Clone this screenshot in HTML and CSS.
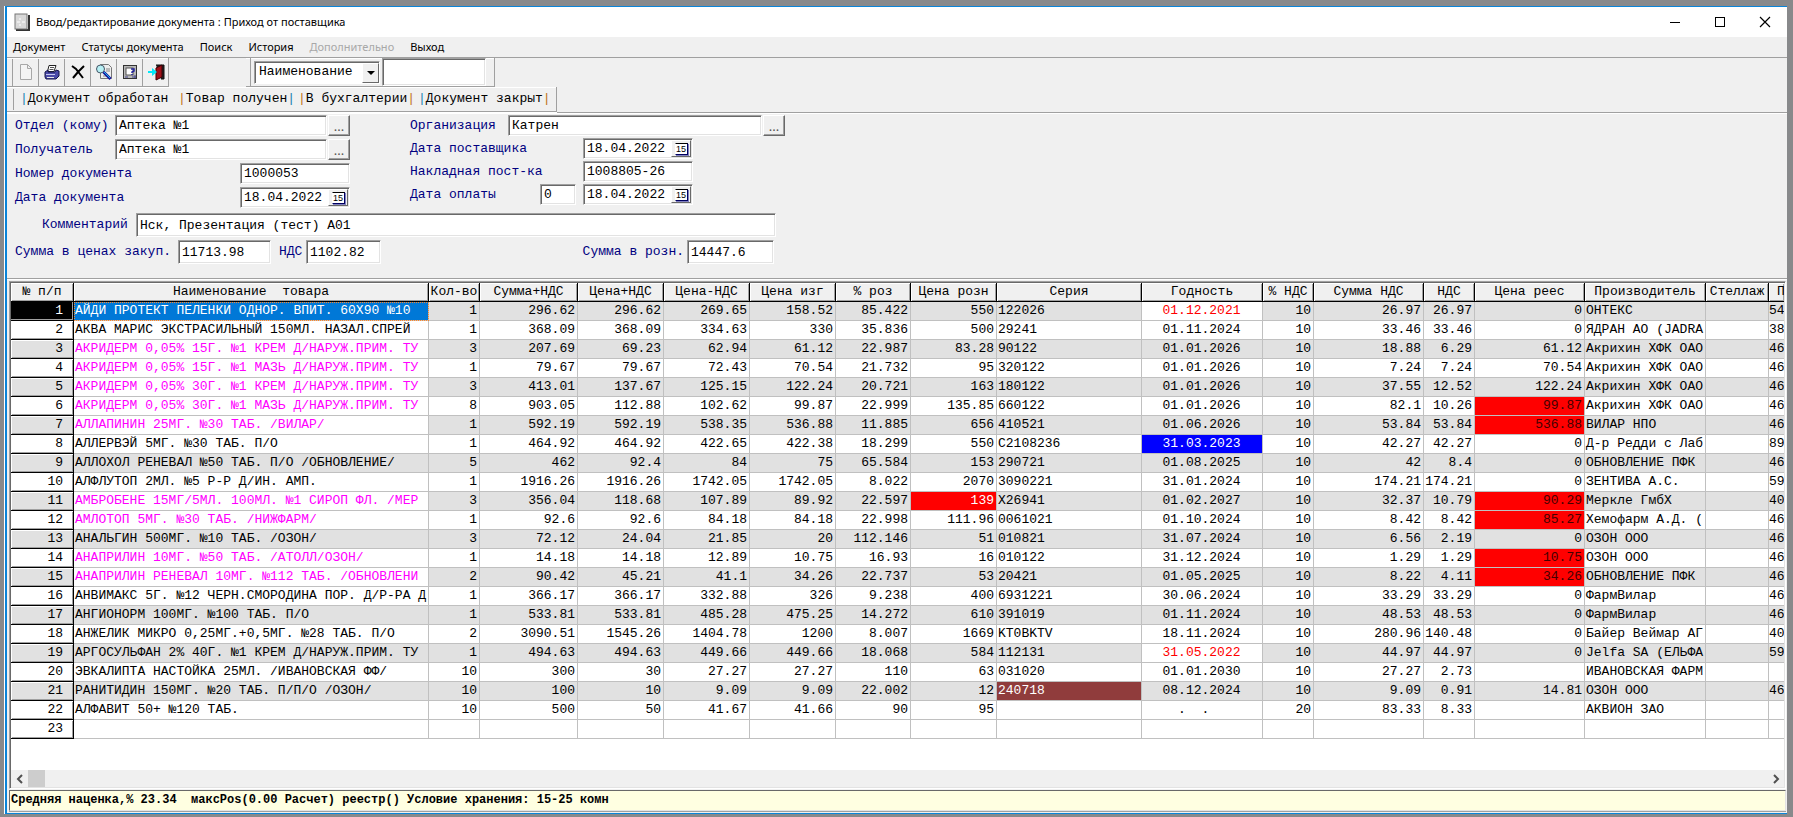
FILE: index.html
```html
<!DOCTYPE html>
<html lang="ru">
<head>
<meta charset="utf-8">
<title>Ввод/редактирование документа : Приход от поставщика</title>
<link rel="stylesheet" href="styles.css">
</head>
<body>
<div class="window">
  <header class="titlebar">
    <svg class="title-icon" width="16" height="18" viewBox="0 0 16 18"><path d="M2 17h13V2" fill="none" stroke="#333" stroke-width="2"/><rect x="1" y="1" width="12" height="15" fill="#d8d8d8" stroke="#777"/><path d="M3 9h3M8 9h3M6 5v2M6 11v2" stroke="#fff"/></svg>
    <h1 class="title">Ввод/редактирование документа : Приход от поставщика</h1>
    <div class="caption-buttons">
      <button class="caption" type="button" aria-label="Свернуть"><svg width="12" height="12" viewBox="0 0 12 12"><path d="M1 6.500h10" stroke="#000"/></svg></button>
      <button class="caption" type="button" aria-label="Развернуть"><svg width="12" height="12" viewBox="0 0 12 12"><rect x="1.500" y="1.500" width="9" height="9" fill="none" stroke="#000"/></svg></button>
      <button class="caption" type="button" aria-label="Закрыть"><svg width="12" height="12" viewBox="0 0 12 12"><path d="M1 1l10 10M11 1L1 11" stroke="#000" stroke-width="1.200"/></svg></button>
    </div>
  </header>

  <nav class="menubar">
    <button class="menu" type="button">Документ</button>
    <button class="menu" type="button">Статусы документа</button>
    <button class="menu" type="button">Поиск</button>
    <button class="menu" type="button">История</button>
    <button class="menu" type="button" disabled>Дополнительно</button>
    <button class="menu" type="button">Выход</button>
  </nav>

  <div class="coolbar">
    <div class="band band-icons">
      <button class="tool" type="button" aria-label="Новый"><svg width="16" height="18" viewBox="0 0 16 18"><path d="M2.500 1.500h7l4 4v11h-11zM9.500 1.500v4h4" fill="#f4f4f4" stroke="#a8a8a8"/></svg></button>
      <button class="tool" type="button" aria-label="Печать"><svg width="16" height="18" viewBox="0 0 16 18"><path d="M5 2.500h7l-2 6H3.500z" fill="#fff" stroke="#222"/><path d="M6 4.500h4M5.500 6.500h4" stroke="#555"/><path d="M1 9l3-2v2h7l1-2 3 1v5l-3 3H2l-1-2z" fill="#4a4aa8" stroke="#15154a"/><path d="M2 11.500h9" stroke="#c8c8f0"/><path d="M3 14.500h7" stroke="#e8e8e8"/></svg></button>
      <button class="tool" type="button" aria-label="Удалить"><svg width="16" height="18" viewBox="0 0 16 18"><path d="M2 3l4 3 7 9M14 3L8 9l-5 6" fill="none" stroke="#000" stroke-width="2"/></svg></button>
      <button class="tool" type="button" aria-label="Просмотр"><svg width="18" height="18" viewBox="0 0 18 18"><path d="M5.500 1.500h8l3 3v11h-11z" fill="#eee" stroke="#777"/><path d="M11 6h4M11 8h4M8 13h5" stroke="#888"/><circle cx="5.500" cy="6" r="4" fill="#b8f0f4" stroke="#456"/><path d="M8.500 9l7 7" stroke="#1515a0" stroke-width="3"/><path d="M9 9l6 6" stroke="#19b8e8"/></svg></button>
      <button class="tool" type="button" aria-label="Свойства"><svg width="16" height="18" viewBox="0 0 16 18"><rect x="1.500" y="2.500" width="13" height="13" fill="#b8b8b8" stroke="#333"/><rect x="4" y="5" width="7" height="7" fill="#fff" stroke="#555"/><path d="M9 6h3v2l-2 1v1M10 11v1" fill="none" stroke="#23239a" stroke-width="1.500"/><path d="M3 14h3M10 14h4M13 12v3" stroke="#44448a"/></svg></button>
      <button class="tool" type="button" aria-label="Выход"><svg width="18" height="18" viewBox="0 0 18 18"><path d="M9 2h8v14h-3" fill="#222" stroke="#111"/><path d="M9 5l6-3v12l-6 3z" fill="#a01018" stroke="#3a0004"/><path d="M1 8h4V5l5 4-5 4v-3H1z" fill="#00e8f8"/></svg></button>
    </div>
    <div class="band band-search">
      <div class="combo">
        <select class="combo-select" aria-label="Поле поиска"><option>Наименование</option></select>
        <span class="combo-arrow"><svg width="8" height="4" viewBox="0 0 8 4"><path d="M0 0h8L4 4z" fill="#000"/></svg></span>
      </div>
      <input class="field search-text" type="text" aria-label="Текст поиска">
    </div>
  </div>
  <div class="coolbar coolbar-status">
    <div class="band band-status">
      <button class="status-tool" type="button"><i class="bar-blue">|</i>Документ обработан</button>
      <button class="status-tool" type="button"><i>|</i>Товар получен<i class="bar-blue">|</i></button>
      <button class="status-tool" type="button"><i>|</i>В бухгалтерии<i>|</i></button>
      <button class="status-tool" type="button"><i class="bar-blue">|</i>Документ закрыт<i>|</i></button>
    </div>
  </div>

  <form class="form">
    <div class="form-top">
      <div class="form-left">
        <div class="row"><label class="lbl lbl-dept" for="dept">Отдел (кому)</label><input class="field grow" id="dept" value="Аптека №1"><button class="pick" type="button">...</button></div>
        <div class="row"><label class="lbl lbl-dept" for="recv">Получатель</label><input class="field grow" id="recv" value="Аптека №1"><button class="pick" type="button">...</button></div>
        <div class="row"><label class="lbl grow" for="num">Номер документа</label><input class="field w-date" id="num" value="1000053"></div>
        <div class="row"><label class="lbl grow" for="ddoc">Дата документа</label><div class="date w-date"><input class="date-text" id="ddoc" value="18.04.2022"><button class="cal" type="button"><span class="cal-page">15</span></button></div></div>
      </div>
      <div class="form-right">
        <div class="row"><label class="lbl lbl-org" for="org">Организация</label><input class="field grow" id="org" value="Катрен"><button class="pick" type="button">...</button></div>
        <div class="row"><label class="lbl lbl-right" for="dsup">Дата поставщика</label><div class="date w-date"><input class="date-text" id="dsup" value="18.04.2022"><button class="cal" type="button"><span class="cal-page">15</span></button></div></div>
        <div class="row"><label class="lbl lbl-right" for="inv">Накладная пост-ка</label><input class="field w-date" id="inv" value="1008805-26"></div>
        <div class="row"><label class="lbl lbl-pay" for="dpay">Дата оплаты</label><input class="field w-days" aria-label="Дней" value="0"><div class="date w-date"><input class="date-text" id="dpay" value="18.04.2022"><button class="cal" type="button"><span class="cal-page">15</span></button></div></div>
      </div>
    </div>
    <div class="row row-tall row-comment"><label class="lbl lbl-comment" for="comm">Комментарий</label><input class="field w-comment" id="comm" value="Нск, Презентация (тест) А01"></div>
    <div class="row row-tall"><label class="lbl lbl-sum" for="sum1">Сумма в ценах закуп.</label><input class="field w-sum1" id="sum1" value="11713.98"><label class="lbl lbl-vat" for="vat">НДС</label><input class="field w-vat" id="vat" value="1102.82"><label class="lbl lbl-retail" for="sum2">Сумма в розн.</label><input class="field w-sum2" id="sum2" value="14447.6"></div>
  </form>

  <main class="grid-box">
    <div class="grid-scroll">
      <table class="grid">
        <colgroup><col class="c-num"><col class="c-name"><col class="c-qty"><col class="c-sum"><col class="c-price"><col class="c-price"><col class="c-price"><col class="c-pct"><col class="c-price"><col class="c-series"><col class="c-date"><col class="c-qty"><col class="c-wide"><col class="c-qty"><col class="c-wide"><col class="c-maker"><col class="c-shelf"><col></colgroup>
        <thead><tr><th>№ п/п<th>Наименование&nbsp; товара<th>Кол-во<th>Сумма+НДС<th>Цена+НДС<th>Цена-НДС<th>Цена изг<th>% роз<th>Цена розн<th>Серия<th>Годность<th>% НДС<th>Сумма НДС<th>НДС<th>Цена реес<th>Производитель<th>Стеллаж<th>П</tr></thead>
        <tbody>
        <tr><th>1<td class="selected">АЙДИ ПРОТЕКТ ПЕЛЕНКИ ОДНОР. ВПИТ. 60Х90 №10<td>1<td>296.62<td>296.62<td>269.65<td>158.52<td>85.422<td>550<td>122026<td class="expired">01.12.2021<td>10<td>26.97<td>26.97<td>0<td>ОНТЕКС<td><td>54</tr>
        <tr><th>2<td>АКВА МАРИС ЭКСТРАСИЛЬНЫЙ 150МЛ. НАЗАЛ.СПРЕЙ<td>1<td>368.09<td>368.09<td>334.63<td>330<td>35.836<td>500<td>29241<td>01.11.2024<td>10<td>33.46<td>33.46<td>0<td>ЯДРАН АО (JADRA<td><td>38</tr>
        <tr><th>3<td class="vital">АКРИДЕРМ 0,05% 15Г. №1 КРЕМ Д/НАРУЖ.ПРИМ. ТУ<td>3<td>207.69<td>69.23<td>62.94<td>61.12<td>22.987<td>83.28<td>90122<td>01.01.2026<td>10<td>18.88<td>6.29<td>61.12<td>Акрихин ХФК ОАО<td><td>46</tr>
        <tr><th>4<td class="vital">АКРИДЕРМ 0,05% 15Г. №1 МАЗЬ Д/НАРУЖ.ПРИМ. ТУ<td>1<td>79.67<td>79.67<td>72.43<td>70.54<td>21.732<td>95<td>320122<td>01.01.2026<td>10<td>7.24<td>7.24<td>70.54<td>Акрихин ХФК ОАО<td><td>46</tr>
        <tr><th>5<td class="vital">АКРИДЕРМ 0,05% 30Г. №1 КРЕМ Д/НАРУЖ.ПРИМ. ТУ<td>3<td>413.01<td>137.67<td>125.15<td>122.24<td>20.721<td>163<td>180122<td>01.01.2026<td>10<td>37.55<td>12.52<td>122.24<td>Акрихин ХФК ОАО<td><td>46</tr>
        <tr><th>6<td class="vital">АКРИДЕРМ 0,05% 30Г. №1 МАЗЬ Д/НАРУЖ.ПРИМ. ТУ<td>8<td>903.05<td>112.88<td>102.62<td>99.87<td>22.999<td>135.85<td>660122<td>01.01.2026<td>10<td>82.1<td>10.26<td class="over">99.87<td>Акрихин ХФК ОАО<td><td>46</tr>
        <tr><th>7<td class="vital">АЛЛАПИНИН 25МГ. №30 ТАБ. /ВИЛАР/<td>1<td>592.19<td>592.19<td>538.35<td>536.88<td>11.885<td>656<td>410521<td>01.06.2026<td>10<td>53.84<td>53.84<td class="over">536.88<td>ВИЛАР НПО<td><td>46</tr>
        <tr><th>8<td>АЛЛЕРВЭЙ 5МГ. №30 ТАБ. П/О<td>1<td>464.92<td>464.92<td>422.65<td>422.38<td>18.299<td>550<td>C2108236<td class="soon">31.03.2023<td>10<td>42.27<td>42.27<td>0<td>Д-р Редди с Лаб<td><td>89</tr>
        <tr><th>9<td>АЛЛОХОЛ РЕНЕВАЛ №50 ТАБ. П/О /ОБНОВЛЕНИЕ/<td>5<td>462<td>92.4<td>84<td>75<td>65.584<td>153<td>290721<td>01.08.2025<td>10<td>42<td>8.4<td>0<td>ОБНОВЛЕНИЕ ПФК<td><td>46</tr>
        <tr><th>10<td>АЛФЛУТОП 2МЛ. №5 Р-Р Д/ИН. АМП.<td>1<td>1916.26<td>1916.26<td>1742.05<td>1742.05<td>8.022<td>2070<td>3090221<td>31.01.2024<td>10<td>174.21<td>174.21<td>0<td>ЗЕНТИВА А.С.<td><td>59</tr>
        <tr><th>11<td class="vital">АМБРОБЕНЕ 15МГ/5МЛ. 100МЛ. №1 СИРОП ФЛ. /МЕР<td>3<td>356.04<td>118.68<td>107.89<td>89.92<td>22.597<td class="alert">139<td>X26941<td>01.02.2027<td>10<td>32.37<td>10.79<td class="over">90.29<td>Меркле ГмбХ<td><td>40</tr>
        <tr><th>12<td class="vital">АМЛОТОП 5МГ. №30 ТАБ. /НИЖФАРМ/<td>1<td>92.6<td>92.6<td>84.18<td>84.18<td>22.998<td>111.96<td>0061021<td>01.10.2024<td>10<td>8.42<td>8.42<td class="over">85.27<td>Хемофарм А.Д. (<td><td>46</tr>
        <tr><th>13<td>АНАЛЬГИН 500МГ. №10 ТАБ. /ОЗОН/<td>3<td>72.12<td>24.04<td>21.85<td>20<td>112.146<td>51<td>010821<td>31.07.2024<td>10<td>6.56<td>2.19<td>0<td>ОЗОН ООО<td><td>46</tr>
        <tr><th>14<td class="vital">АНАПРИЛИН 10МГ. №50 ТАБ. /АТОЛЛ/ОЗОН/<td>1<td>14.18<td>14.18<td>12.89<td>10.75<td>16.93<td>16<td>010122<td>31.12.2024<td>10<td>1.29<td>1.29<td class="over">10.75<td>ОЗОН ООО<td><td>46</tr>
        <tr><th>15<td class="vital">АНАПРИЛИН РЕНЕВАЛ 10МГ. №112 ТАБ. /ОБНОВЛЕНИ<td>2<td>90.42<td>45.21<td>41.1<td>34.26<td>22.737<td>53<td>20421<td>01.05.2025<td>10<td>8.22<td>4.11<td class="over">34.26<td>ОБНОВЛЕНИЕ ПФК<td><td>46</tr>
        <tr><th>16<td>АНВИМАКС 5Г. №12 ЧЕРН.СМОРОДИНА ПОР. Д/Р-РА Д<td>1<td>366.17<td>366.17<td>332.88<td>326<td>9.238<td>400<td>6931221<td>30.06.2024<td>10<td>33.29<td>33.29<td>0<td>ФармВилар<td><td>46</tr>
        <tr><th>17<td>АНГИОНОРМ 100МГ. №100 ТАБ. П/О<td>1<td>533.81<td>533.81<td>485.28<td>475.25<td>14.272<td>610<td>391019<td>01.11.2024<td>10<td>48.53<td>48.53<td>0<td>ФармВилар<td><td>46</tr>
        <tr><th>18<td>АНЖЕЛИК МИКРО 0,25МГ.+0,5МГ. №28 ТАБ. П/О<td>2<td>3090.51<td>1545.26<td>1404.78<td>1200<td>8.007<td>1669<td>KT0BKTV<td>18.11.2024<td>10<td>280.96<td>140.48<td>0<td>Байер Веймар АГ<td><td>40</tr>
        <tr><th>19<td>АРГОСУЛЬФАН 2% 40Г. №1 КРЕМ Д/НАРУЖ.ПРИМ. ТУ<td>1<td>494.63<td>494.63<td>449.66<td>449.66<td>18.068<td>584<td>112131<td class="expired">31.05.2022<td>10<td>44.97<td>44.97<td>0<td>Jelfa SA (ЕЛЬФА<td><td>59</tr>
        <tr><th>20<td>ЭВКАЛИПТА НАСТОЙКА 25МЛ. /ИВАНОВСКАЯ ФФ/<td>10<td>300<td>30<td>27.27<td>27.27<td>110<td>63<td>031020<td>01.01.2030<td>10<td>27.27<td>2.73<td><td>ИВАНОВСКАЯ ФАРМ<td><td></tr>
        <tr><th>21<td>РАНИТИДИН 150МГ. №20 ТАБ. П/П/О /ОЗОН/<td>10<td>100<td>10<td>9.09<td>9.09<td>22.002<td>12<td class="reject">240718<td>08.12.2024<td>10<td>9.09<td>0.91<td>14.81<td>ОЗОН ООО<td><td>46</tr>
        <tr><th>22<td>АЛФАВИТ 50+ №120 ТАБ.<td>10<td>500<td>50<td>41.67<td>41.66<td>90<td>95<td><td>&nbsp;&nbsp;.&nbsp;&nbsp;.&nbsp;&nbsp;&nbsp;&nbsp;<td>20<td>83.33<td>8.33<td><td>АКВИОН ЗАО<td><td></tr>
        <tr class="blank"><th>23
          <td><td><td><td><td>
          <td><td><td><td><td>
          <td><td><td><td><td>
          <td><td></tr>
        </tbody>
      </table>
    </div>
    <div class="hscroll">
      <button class="hscroll-btn" type="button" aria-label="Влево"><svg width="8" height="10" viewBox="0 0 8 10"><path d="M6 1L2 5l4 4" fill="none" stroke="#505050" stroke-width="2"/></svg></button>
      <span class="hscroll-thumb"></span>
      <button class="hscroll-btn hscroll-right" type="button" aria-label="Вправо"><svg width="8" height="10" viewBox="0 0 8 10"><path d="M2 1l4 4-4 4" fill="none" stroke="#505050" stroke-width="2"/></svg></button>
    </div>
  </main>

  <footer class="statusbar">Средняя наценка,% 23.34&nbsp; максРоs(0.00 Расчет) реестр() Условие хранения: 15-25 комн</footer>
</div>
</body>
</html>
```
FILE: styles.css
```css
:root {
  --mono: "Liberation Mono", monospace;
  --ui: "Noto Sans", sans-serif;
  --face: #f0f0f0;
  --shade: #a0a0a0;
  --dark: #696969;
  --line: #c0c0c0;
}

* { box-sizing: border-box; }

body {
  margin: 0;
  height: 100vh;
  padding: 6px 6px 3px 5px;
  background: #88898b;
  font: 13px/18px var(--mono);
  color: #000;
  overflow: hidden;
}

button, input, select { font: inherit; color: inherit; margin: 0; border-radius: 0; }
button { padding: 0; border: 0; background: none; }

.window {
  display: flex;
  flex-direction: column;
  height: 100%;
  background: var(--face);
  border-top: 1px solid #0a84d8;
  border-bottom: 1px solid #0a84d8;
  border-left: 2px solid #0a84d8;
  box-shadow: -1px 0 #fff;
}

/* title and menu */
.titlebar {
  display: flex;
  align-items: center;
  height: 30px;
  padding-left: 7px;
  background: #fff;
  font: 11px/18px var(--ui);
}
.title { flex: 1; margin: 0 0 0 6px; font: inherit; }
.caption-buttons { display: flex; }
.caption { width: 45px; height: 30px; display: grid; place-items: center; }
.menubar { display: flex; gap: 16px; height: 20px; padding-left: 6px; font: 11px/18px var(--ui); }
.menu:disabled { color: #a8a8a8; }

/* toolbars */
.coolbar { display: flex; gap: 77px; height: 29px; border-top: 1px solid var(--shade); }
.band {
  display: flex;
  align-items: center;
  height: 29px;
  border-right: 1px solid var(--shade);
  border-bottom: 1px solid var(--shade);
  box-shadow: inset 0 1px #fff, 0 1px #fff;
}
.band-icons { padding-left: 5px; }
.tool { width: 26px; height: 27px; display: grid; place-items: center; border-left: 1px solid var(--shade); }
.band-search { padding: 0 8px 0 4px; gap: 2px; }
.band-search::before { content: ""; align-self: stretch; width: 1px; margin-right: 1px; background: var(--shade); }
.combo { position: relative; width: 126px; height: 23px; border: 1px solid; border-color: var(--shade) #fff #fff var(--shade); background: #fff; box-shadow: inset 1px 1px var(--dark); }
.combo-select { appearance: none; width: 100%; height: 21px; padding: 0 0 0 4px; border: 0; background: none; }
.combo-arrow {
  position: absolute;
  top: 1px;
  right: 0;
  width: 17px;
  height: 20px;
  display: grid;
  place-items: center;
  background: var(--face);
  border: 1px solid;
  border-color: #fff var(--dark) var(--dark) #fff;
  pointer-events: none;
}
.search-text { width: 104px; height: 23px; }
.coolbar-status { height: 27px; border-top: 0; padding-top: 1px; border-bottom: 1px solid var(--shade); box-shadow: 0 1px #fff; }
.band-status { height: 25px; padding: 0 5px 0 6px; }
.band-status::before { content: ""; width: 1px; height: 21px; margin-right: 6px; background: var(--shade); }
.status-tool { width: 120px; text-align: left; white-space: nowrap; }
.status-tool:first-of-type { width: 158px; }
.status-tool:last-of-type { width: 133px; }
.status-tool i { font-style: normal; color: #c07018; }
.status-tool .bar-blue { color: #2080b0; }

/* document fields */
.form { padding: 2px 8px 14px; border-bottom: 1px solid var(--shade); box-shadow: 0 1px #fff; color: #000080; }
.form-top { display: flex; gap: 60px; }
.form-left { display: flex; flex-direction: column; gap: 3px; width: 335px; }
.form-right { display: flex; flex-direction: column; gap: 2px; width: 375px; }
.row { display: flex; align-items: center; height: 21px; }
.row-tall { height: 24px; margin-top: 3px; }
.row-comment { margin-top: 5px; }
.lbl { white-space: nowrap; }
.lbl-dept { width: 100px; }
.lbl-org { width: 98px; }
.lbl-right { width: 173px; }
.lbl-pay { width: 130px; }
.lbl-comment { width: 121px; padding-left: 27px; }
.lbl-sum { width: 163px; }
.lbl-vat { width: 35px; padding-left: 8px; }
.lbl-retail { width: 306px; padding-right: 3px; text-align: right; }
.grow { flex: 1; min-width: 0; }
.field, .date {
  height: 100%;
  padding: 0 3px;
  color: #000;
  background: #fff;
  border: 1px solid;
  border-color: var(--shade) #fff #fff var(--shade);
  box-shadow: inset 1px 1px var(--dark), inset -1px -1px #e3e3e3;
}
.w-date { width: 110px; }
.w-days { width: 36px; margin-right: 7px; }
.w-comment { width: 640px; }
.w-sum1 { width: 93px; }
.w-vat { width: 75px; }
.w-sum2 { width: 87px; }
.pick {
  width: 22px;
  height: 100%;
  margin-left: 1px;
  background: var(--face);
  border: 1px solid;
  border-color: #fff var(--dark) var(--dark) #fff;
  box-shadow: inset -1px -1px var(--shade);
  color: #555;
  font: 13px/16px var(--ui);
}
.date { display: flex; align-items: center; padding: 1px 1px 1px 3px; }
.date-text { flex: 1; min-width: 0; height: 100%; padding: 0; border: 0; background: none; }
.cal {
  width: 20px;
  height: 100%;
  display: grid;
  place-items: center;
  background: var(--face);
  border: 1px solid;
  border-color: #fff var(--dark) var(--dark) #fff;
}
.cal-page {
  width: 13px;
  height: 12px;
  background: #fff;
  border: 1px solid;
  border-color: #000 #000060 #000060 #fff;
  box-shadow: 1px 1px #8080c0;
  color: #000;
  text-align: center;
  font: 9px/10px "Liberation Sans", sans-serif;
}

/* goods table */
.grid-box {
  flex: 1;
  min-height: 0;
  display: flex;
  flex-direction: column;
  margin: 2px 1px 0 2px;
  background: #fff;
  border: 1px solid;
  border-color: var(--shade) #fff #fff var(--shade);
  box-shadow: inset 1px 1px var(--dark), inset -1px -1px #e3e3e3;
  padding: 1px;
}
.grid-scroll { flex: 1; min-height: 0; overflow: hidden; }
.grid { width: 100%; table-layout: fixed; border-collapse: separate; border-spacing: 0; }
.c-num { width: 63px; }
.c-name { width: 355px; }
.c-qty { width: 51px; }
.c-sum { width: 98px; }
.c-price { width: 86px; }
.c-pct { width: 75px; }
.c-series { width: 145px; }
.c-date, .c-maker { width: 121px; }
.c-wide { width: 110px; }
.c-shelf { width: 63px; }
.grid th, .grid td {
  height: 19px;
  padding: 0 2px 0 1px;
  line-height: 18px;
  font-weight: normal;
  text-align: right;
  white-space: nowrap;
  overflow: hidden;
  border-right: 1px solid var(--line);
  border-bottom: 1px solid var(--line);
}
.grid th { border-color: #000; box-shadow: inset 1px 1px #fff, inset -1px -1px var(--shade); }
.grid thead th { padding: 0 1px; text-align: center; background: var(--face); }
.grid thead th:last-child { padding: 0 0 0 8px; text-align: left; }
.grid tbody th { padding-right: 10px; }
.grid tbody tr:nth-child(odd) { background: #e1e1e1; }
.grid tbody .blank:nth-child(odd) { background: #fff; }
.grid tbody tr:first-child th { background: #000; color: #fff; box-shadow: inset -1px -1px var(--shade); }
.grid td:nth-child(2), .grid td:nth-child(10), .grid td:nth-child(16), .grid td:last-child { text-align: left; }
.grid td:last-child { padding: 0; }
.grid td:nth-child(11) { text-align: center; }
.grid th:last-child, .grid td:last-child { border-right: 0; }
.grid tbody th { border-right: 1px solid #000; }
.grid .vital { color: #f0f; background: #fff; }
.grid .selected { color: #fff; background: #0078d7; outline: 1px dotted #ff8728; outline-offset: -1px; }
.grid td.expired { color: #f00; background: #fff; }
.grid td.soon { color: #fff; background: #00f; }
.grid td.over { color: #400; background: #f00; }
.grid td.alert { color: #fff; background: #f00; }
.grid td.reject { color: #fff; background: #903c3c; }
.hscroll { display: flex; height: 17px; background: var(--face); }
.hscroll-btn { width: 17px; display: grid; place-items: center; }
.hscroll-thumb { width: 17px; background: #cdcdcd; }
.hscroll-right { margin-left: auto; }

.statusbar {
  height: 21px;
  margin: 1px 1px 2px 2px;
  padding: 0 1px;
  background: #ffffe1;
  border: 1px solid;
  border-color: var(--dark) #e3e3e3 #e3e3e3 var(--dark);
  box-shadow: 0 1px var(--shade);
  font: bold 12px/19px var(--mono);
  white-space: nowrap;
  overflow: hidden;
}
```
